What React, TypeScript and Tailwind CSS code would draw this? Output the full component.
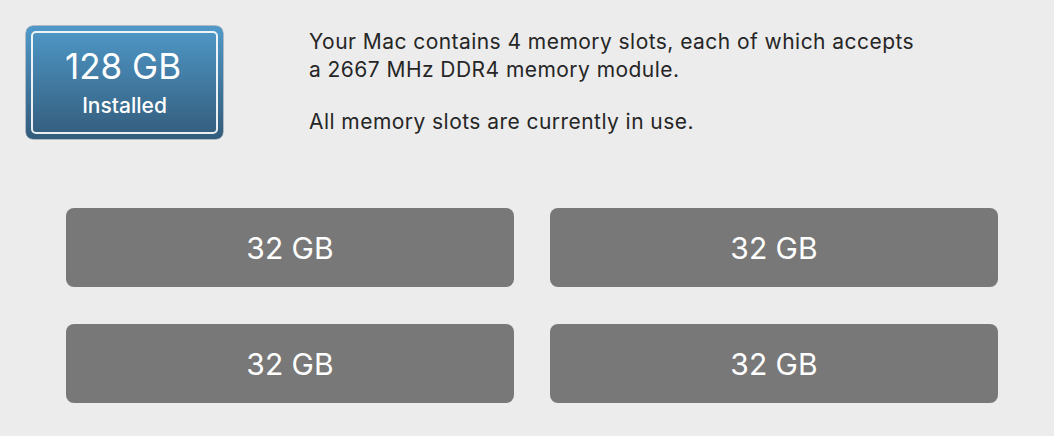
const slots = ['32 GB', '32 GB', '32 GB', '32 GB'];

const MemoryPane = () => {
    return (
        <div className="w-[1054px] h-[436px] bg-[#ececec] font-['Inter','Liberation_Sans',sans-serif] overflow-hidden">
            <div className="flex pl-[26px] pt-[26px]">
                <div className="w-[197px] h-[113px] shrink-0 rounded-[7px] p-[5px] bg-gradient-to-b from-[#4f99c9] to-[#335c7c] shadow-[0_0_0_0.5px_rgba(40,70,100,0.6)]">
                    <div className="h-full rounded-[5px] border-2 border-white/90 flex flex-col items-center justify-center text-white">
                        <span className="text-[35px] leading-none mr-[3px]">128 GB</span>
                        <span className="text-[21px] leading-none font-medium mt-[11px]">Installed</span>
                    </div>
                </div>
                <div className="ml-[86px] pt-[2px] text-[21px] tracking-[0.45px] leading-[28px] text-[#262626]">
                    <p>Your Mac contains 4 memory slots, each of which accepts<br />a 2667 MHz DDR4 memory module.</p>
                    <p className="mt-[24px]">All memory slots are currently in use.</p>
                </div>
            </div>
            <div className="grid grid-cols-2 gap-x-[36px] gap-y-[37px] ml-[66px] w-[932px] mt-[69px]">
                {slots.map((s, i) => (
                    <div key={i} className="h-[79px] rounded-[8px] bg-[#787878] flex items-center justify-center text-white text-[30px] pt-[2px]">
                        {s}
                    </div>
                ))}
            </div>
        </div>
    );
};

export default function App() {
    return <MemoryPane />;
}
